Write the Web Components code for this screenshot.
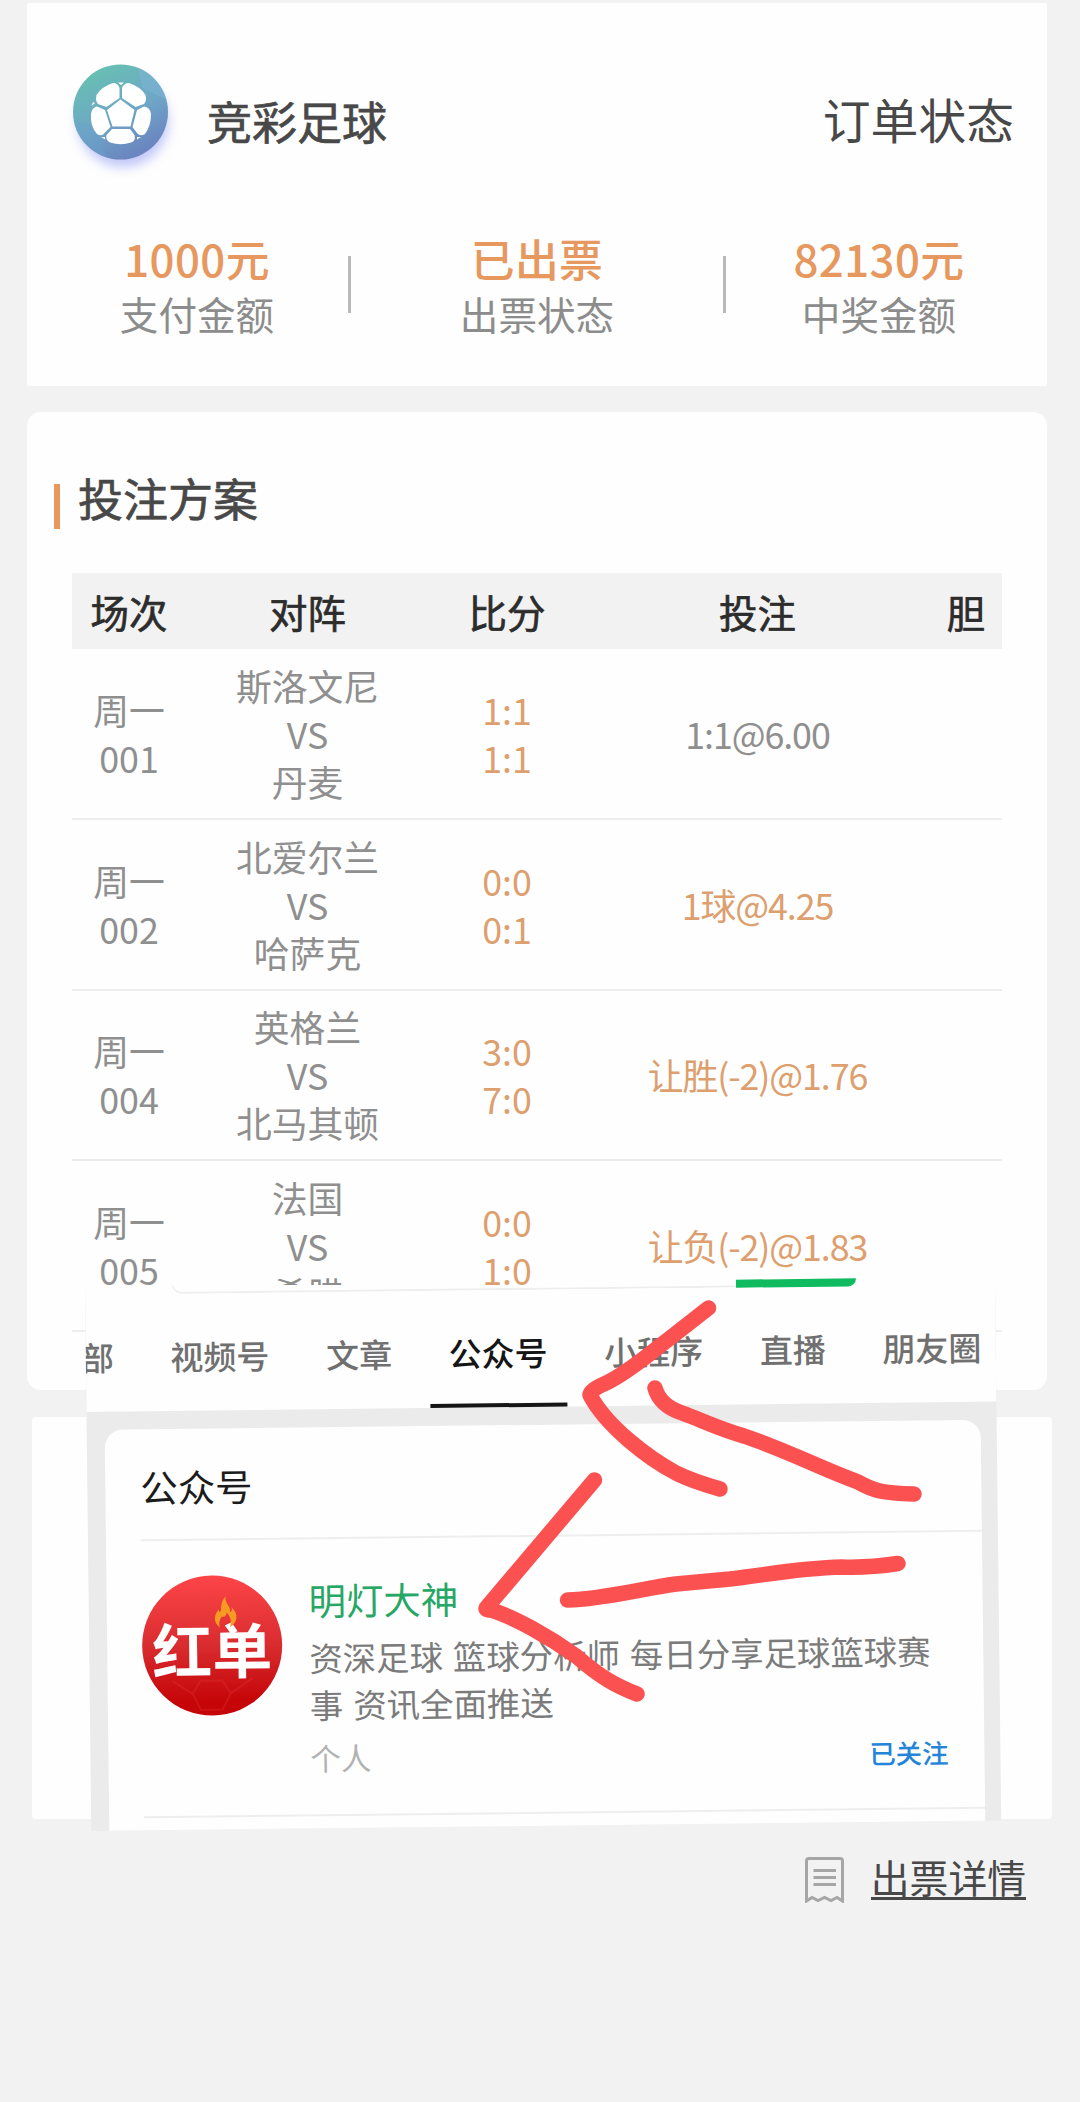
<!DOCTYPE html>
<html lang="zh-CN">
<head>
<meta charset="utf-8">
<title>订单状态</title>
<style>
    body {
        margin: 0;
        width: 1080px;
        height: 2102px;
        position: relative;
        overflow: hidden;
        background: #f2f2f2;
        font-family: "Noto Sans CJK SC", "Noto Sans", sans-serif;
        color: #484848;
    }
</style>
</head>
<body>
<order-page>
    <order-card style="--height: 383px; --margin: 3px 33px 0 27px">
        <order-header>
            竞彩足球
            <span slot="status">订单状态</span>
        </order-header>
        <stat-row>
            <stat-item label="支付金额">1000元</stat-item>
            <stat-item label="出票状态">已出票</stat-item>
            <stat-item label="中奖金额">82130元</stat-item>
        </stat-row>
    </order-card>
    <order-card style="--height: 978px; --margin: 26px 33px 0 27px; --radius: 14px">
        <section-title>投注方案</section-title>
        <match-table></match-table>
    </order-card>
    <order-card style="--height: 402px; --margin: 27px 28px 0 32px; --radius: 4px"></order-card>
    <ticket-link>出票详情</ticket-link>
    <search-sheet></search-sheet>
    <pen-marks></pen-marks>
</order-page>

<script>
class OrderPage extends HTMLElement {
    constructor() {
        super();
        this.attachShadow({ mode: 'open' });
        this.shadowRoot.innerHTML = `
            <style>
                :host {
                    display: flex;
                    flex-direction: column;
                }
            </style>
            <slot></slot>
        `;
    }
}

class OrderCard extends HTMLElement {
    constructor() {
        super();
        this.attachShadow({ mode: 'open' });
        this.shadowRoot.innerHTML = `
            <style>
                :host {
                    display: block;
                    box-sizing: border-box;
                    height: var(--height);
                    margin: var(--margin);
                    border-radius: var(--radius, 2px);
                    background: #fefefe;
                }
            </style>
            <slot></slot>
        `;
    }
}

class OrderHeader extends HTMLElement {
    constructor() {
        super();
        this.attachShadow({ mode: 'open' });
        this.shadowRoot.innerHTML = `
            <style>
                :host {
                    display: flex;
                    align-items: center;
                    padding: 50px 33px 0 33px;
                    height: 136px;
                }

                svg {
                    flex: none;
                    margin-top: -2px;
                }

                .name {
                    flex: 1;
                    margin-left: 23px;
                    font-size: 45px;
                    line-height: 60px;
                    -webkit-text-stroke: 0.7px;
                }

                ::slotted([slot="status"]) {
                    margin-top: -4px;
                    font-size: 47.8px;
                    line-height: 60px;
                }
            </style>
            <svg width="124" height="136" viewBox="0 0 124 136">
                <defs>
                    <linearGradient id="ball" x1="0.2" y1="0" x2="0.7" y2="1">
                        <stop offset="0.1" stop-color="#68bdb4"/>
                        <stop offset="0.55" stop-color="#6ea6c6"/>
                        <stop offset="1" stop-color="#6a80bf"/>
                    </linearGradient>
                    <filter id="glow" x="-30%" y="-30%" width="160%" height="160%">
                        <feGaussianBlur stdDeviation="6"/>
                    </filter>
                    <clipPath id="disc"><circle cx="60.5" cy="60" r="47.5"/></clipPath>
                </defs>
                <circle cx="63" cy="70" r="45" fill="#a9b2f5" opacity="0.75" filter="url(#glow)"/>
                <circle cx="60.5" cy="60" r="47.5" fill="url(#ball)"/>
                <g clip-path="url(#disc)">
                    <path d="M77 12L82 36L112 50V12Z" fill="#7fb4d8" opacity="0.5"/>
                    <path d="M10 68L36 74L48 110H10Z" fill="#6aa0cc" opacity="0.35"/>
                </g>
                <g fill="#fff">
                    <path d="M60.500 47.500L74.500 58L70.500 74.500H52.500L47 58Z"/>
                    <path d="M59.500 46V36Q58 31 53 31Q41 35 36.500 43Q35 49 38 52L46.500 55Z"/>
                    <path d="M62 46V36Q64 31 69 31Q81 35 85.500 43Q87 49 84 52L75.500 55Z"/>
                    <path d="M45 58L37 54.500Q32 55 31 62Q30 74 37 82Q42 85 44.500 81L50.500 75Z"/>
                    <path d="M77 58L84 54.500Q90 55 91 62Q91 74 85 82Q80 85 77 81L72.500 75Z"/>
                    <path d="M52 77H70L74.500 83Q76 89 71 90.500Q61 94 50 90.500Q45 88 46.500 83Z"/>
                    <path d="M58 30.500H64L61 33ZM33 50L35 51L31.500 54ZM41 85H45V87.500ZM77 85H81L77 87.500Z"/>
                </g>
            </svg>
            <div class="name"><slot></slot></div>
            <slot name="status"></slot>
        `;
    }
}

class StatRow extends HTMLElement {
    constructor() {
        super();
        this.attachShadow({ mode: 'open' });
        this.shadowRoot.innerHTML = `
            <style>
                :host {
                    display: grid;
                    grid-template-columns: 305px 375px 306px;
                    padding: 43px 15px 0 19px;
                }

                ::slotted(stat-item:not(:last-child)) {
                    --line: 3px;
                }
            </style>
            <slot></slot>
        `;
    }
}

class StatItem extends HTMLElement {
    constructor() {
        super();
        this.attachShadow({ mode: 'open' });
        this.shadowRoot.innerHTML = `
            <style>
                :host {
                    display: flex;
                    align-items: center;
                    height: 106px;
                }

                .text {
                    flex: 1;
                    text-align: center;
                }

                .value {
                    color: #e6985f;
                    font-size: 43.8px;
                    font-weight: 500;
                    line-height: 56px;
                    letter-spacing: 0.4px;
                }

                .label {
                    color: #8c8c8c;
                    font-size: 38.6px;
                    line-height: 54px;
                }

                .line {
                    width: var(--line, 0px);
                    height: 57px;
                    margin-top: -2px;
                    background: #b9b9b9;
                }
            </style>
            <div class="text">
                <div class="value"><slot></slot></div>
                <div class="label">${this.getAttribute('label')}</div>
            </div>
            <div class="line"></div>
        `;
    }
}

class SectionTitle extends HTMLElement {
    constructor() {
        super();
        this.attachShadow({ mode: 'open' });
        this.shadowRoot.innerHTML = `
            <style>
                :host {
                    display: flex;
                    gap: 18px;
                    padding: 56px 0 0 27px;
                    height: 105px;
                    font-size: 45px;
                    line-height: 60px;
                    -webkit-text-stroke: 0.7px;
                }

                i {
                    width: 6px;
                    height: 45px;
                    margin-top: 16px;
                    background: #eb965b;
                }
            </style>
            <i></i>
            <span><slot></slot></span>
        `;
    }
}

class MatchTable extends HTMLElement {
    constructor() {
        super();
        this.attachShadow({ mode: 'open' });
        const heads = ['场次', '对阵', '比分', '投注', '胆'];
        const matches = [
            { no: '001', teams: ['斯洛文尼', '丹麦'], scores: ['1:1', '1:1'], bet: '1:1@6.00', lost: true },
            { no: '002', teams: ['北爱尔兰', '哈萨克'], scores: ['0:0', '0:1'], bet: '1球@4.25' },
            { no: '004', teams: ['英格兰', '北马其顿'], scores: ['3:0', '7:0'], bet: '让胜(-2)@1.76' },
            { no: '005', teams: ['法国', '希腊'], scores: ['0:0', '1:0'], bet: '让负(-2)@1.83' }
        ];
        this.shadowRoot.innerHTML = `
            <style>
                :host {
                    display: block;
                    margin: 0 45px;
                }

                .row {
                    display: grid;
                    grid-template-columns: 114px 243px 156px 345px 72px;
                    align-items: center;
                    justify-items: center;
                    text-align: center;
                    box-sizing: border-box;
                    height: 170.8px;
                    border-bottom: 2px solid #ededed;
                    font-size: 35.8px;
                    line-height: 48px;
                    color: #8f8f8f;
                }

                .row > * {
                    margin-top: -1px;
                }

                .head {
                    height: 76px;
                    border: 0;
                    background: #f2f2f2;
                    font-size: 38.4px;
                    color: #2c2c2c;
                    -webkit-text-stroke: 0.7px;
                }

                .hit {
                    color: #dd9f6e;
                }

                .bet {
                    letter-spacing: -1.1px;
                }
            </style>
            <div class="row head">${heads.map(head => `<span>${head}</span>`).join('')}</div>
            ${matches.map(match => `
                <div class="row">
                    <div>周一<br>${match.no}</div>
                    <div>${match.teams[0]}<br>VS<br>${match.teams[1]}</div>
                    <div class="hit">${match.scores.join('<br>')}</div>
                    <div class="bet ${match.lost ? '' : 'hit'}">${match.bet}</div>
                </div>
            `).join('')}
        `;
    }
}

class TicketLink extends HTMLElement {
    constructor() {
        super();
        this.attachShadow({ mode: 'open' });
        this.shadowRoot.innerHTML = `
            <style>
                :host {
                    display: flex;
                    align-items: center;
                    justify-content: flex-end;
                    gap: 27px;
                    height: 60px;
                    margin: 31px 54px 0 0;
                }

                span {
                    font-size: 38.8px;
                    line-height: 40px;
                    height: 41px;
                    margin-top: -4px;
                    border-bottom: 3px solid #484848;
                }
            </style>
            <svg width="39" height="46" viewBox="0 0 39 46" fill="none" stroke="#a6a6a6">
                <path d="M1.500 44V4Q1.500 1.500 4 1.500H35Q37.500 1.500 37.500 4V44L32 40.500L26 43.500L19.500 40.500L13 43.500L7 40.500Z" stroke-width="3"/>
                <path d="M8.500 13.500H31M8.500 20.500H31M8.500 27.500H31" stroke-width="3.200"/>
            </svg>
            <span><slot></slot></span>
        `;
    }
}

class SearchSheet extends HTMLElement {
    constructor() {
        super();
        this.attachShadow({ mode: 'open' });
        const tabs = ['部', '视频号', '文章', '公众号', '小程序', '直播', '朋友圈'];
        this.shadowRoot.innerHTML = `
            <style>
                /* floats over the cards, slightly turned */
                :host {
                    position: absolute;
                    left: 85px;
                    top: 1285px;
                    width: 930px;
                    height: 560px;
                }

                .clip {
                    height: 100%;
                    overflow: hidden;
                }

                .sheet {
                    width: 910px;
                    height: 546px;
                    overflow: hidden;
                    background: #ebebeb;
                    transform: rotate(-0.66deg);
                    transform-origin: 0 0;
                }

                .bar {
                    position: absolute;
                    left: 651px;
                    top: -6px;
                    width: 120px;
                    height: 7.5px;
                    border-radius: 0 0 8px 0;
                    background: #10ba5e;
                    transform: rotate(-0.66deg);
                }

                .edge {
                    height: 10px;
                    margin-left: 87px;
                    width: 566px;
                    box-sizing: border-box;
                    border: solid #eeeeee;
                    border-width: 0 0 2px 1px;
                    border-bottom-left-radius: 12px;
                }

                .top {
                    background: #fefefe;
                    height: 127px;
                }

                nav {
                    display: flex;
                    gap: 18.6px;
                    height: 117px;
                    margin-left: -24px;
                }

                nav span {
                    flex: none;
                    box-sizing: border-box;
                    height: 117px;
                    padding: 0 19px;
                    font-size: 33px;
                    font-weight: 500;
                    line-height: 124px;
                    color: #707070;
                }

                nav .on {
                    color: #151515;
                    border-bottom: 4.5px solid #151515;
                }

                .panel {
                    box-sizing: border-box;
                    width: 876px;
                    height: 420px;
                    margin: 18px 0 0 18px;
                    padding-left: 35px;
                    border-radius: 18px 18px 0 0;
                    background: #fefefe;
                }

                h2 {
                    margin: 0;
                    height: 110px;
                    border-bottom: 2px solid #eeeeee;
                    font-size: 37.4px;
                    font-weight: 400;
                    line-height: 115px;
                    color: #1c1c1c;
                }

                .account {
                    display: flex;
                    gap: 27px;
                    box-sizing: border-box;
                    height: 277px;
                    padding-top: 35px;
                    border-bottom: 2px solid #eeeeee;
                }

                .info {
                    flex: 1;
                    padding-right: 36px;
                }

                .name {
                    margin-top: -2px;
                    font-size: 37.4px;
                    line-height: 54px;
                    color: #27a766;
                }

                .desc {
                    margin-top: 7px;
                    font-size: 33.4px;
                    line-height: 47px;
                    white-space: nowrap;
                    word-spacing: 2.6px;
                    color: #7b7b7b;
                }

                .foot {
                    display: flex;
                    align-items: center;
                    justify-content: space-between;
                    height: 60px;
                    font-size: 30.4px;
                    color: #b2b2b2;
                }

                .foot b {
                    margin-top: 2px;
                    font-size: 26.4px;
                    font-weight: 500;
                    color: #2384d8;
                }
            </style>
            <div class="clip">
                <div class="sheet">
                    <div class="top">
                        <div class="edge"></div>
                        <nav>${tabs.map(tab => `<span class="${tab === '公众号' ? 'on' : ''}">${tab}</span>`).join('')}</nav>
                    </div>
                    <div class="panel">
                        <h2>公众号</h2>
                        <div class="account">
                            <account-avatar>红单</account-avatar>
                            <div class="info">
                                <div class="name">明灯大神</div>
                                <div class="desc">资深足球 篮球分析师 每日分享足球篮球赛<br>事 资讯全面推送</div>
                                <div class="foot"><span>个人</span><b>已关注</b></div>
                            </div>
                        </div>
                    </div>
                </div>
            </div>
            <div class="bar"></div>
        `;
    }
}

class AccountAvatar extends HTMLElement {
    constructor() {
        super();
        this.attachShadow({ mode: 'open' });
        this.shadowRoot.innerHTML = `
            <style>
                :host {
                    flex: none;
                    display: grid;
                    place-items: center;
                    position: relative;
                    overflow: hidden;
                    width: 140px;
                    height: 140px;
                    border-radius: 50%;
                    background: linear-gradient(#fd4548, #d92c2f 50%, #c50508 90%);
                    color: #fff;
                    font-size: 60px;
                    font-weight: 700;
                    line-height: 60px;
                    white-space: nowrap;
                }

                svg {
                    position: absolute;
                    left: 0;
                    top: 0;
                }

                span {
                    margin-top: 3px;
                }
            </style>
            <span><slot></slot></span>
            <svg width="140" height="140" viewBox="0 0 140 140">
                <path d="M58 105H80L88 118L80 134H58L50 118ZM50 118L30 105M88 118L110 103" fill="none" stroke="#e0383a" stroke-width="2" opacity="0.3"/>
                <path d="M78 52C70 46 73 38 77 34C77 37 79 37 79 35C80 30 79 26 84 21C83 29 90 31 88 37C91 36 90 33 90 32C97 39 96 47 88 52C90 46 89 42 85 37C84 41 82 42 80 41C77 45 77 49 78 52Z" fill="#f79a22"/>
            </svg>
        `;
    }
}

class PenMarks extends HTMLElement {
    constructor() {
        super();
        this.attachShadow({ mode: 'open' });
        this.shadowRoot.innerHTML = `
            <style>
                :host {
                    position: absolute;
                    left: 0;
                    top: 0;
                    pointer-events: none;
                }

                svg {
                    display: block;
                }
            </style>
            <svg width="1080" height="2102" fill="none" stroke="#fc5151" stroke-width="15.500" stroke-linecap="round" stroke-linejoin="round">
                <path d="M708.500 1308L656 1349C632 1368 618 1378 604 1384Q590 1390 590 1395C606 1426 648 1458 676 1473Q692 1481 720 1489"/>
                <path d="M655 1388C658 1399 667 1408 682 1413C702 1420 714 1427 744 1436C786 1450 820 1468 858 1482C874 1491 882 1493 914 1494"/>
                <path d="M594.500 1480L487 1607Q484 1610 491 1610C514 1617 548 1636 576 1656C600 1677 616 1686 637 1694"/>
                <path d="M567.500 1600C604 1599 640 1589 676 1584L730 1579C764 1575 800 1568 842 1567Q868 1568 898 1563.500"/>
            </svg>
        `;
    }
}

customElements.define('order-page', OrderPage);
customElements.define('order-card', OrderCard);
customElements.define('order-header', OrderHeader);
customElements.define('stat-row', StatRow);
customElements.define('stat-item', StatItem);
customElements.define('section-title', SectionTitle);
customElements.define('match-table', MatchTable);
customElements.define('ticket-link', TicketLink);
customElements.define('account-avatar', AccountAvatar);
customElements.define('search-sheet', SearchSheet);
customElements.define('pen-marks', PenMarks);
</script>
</body>
</html>
